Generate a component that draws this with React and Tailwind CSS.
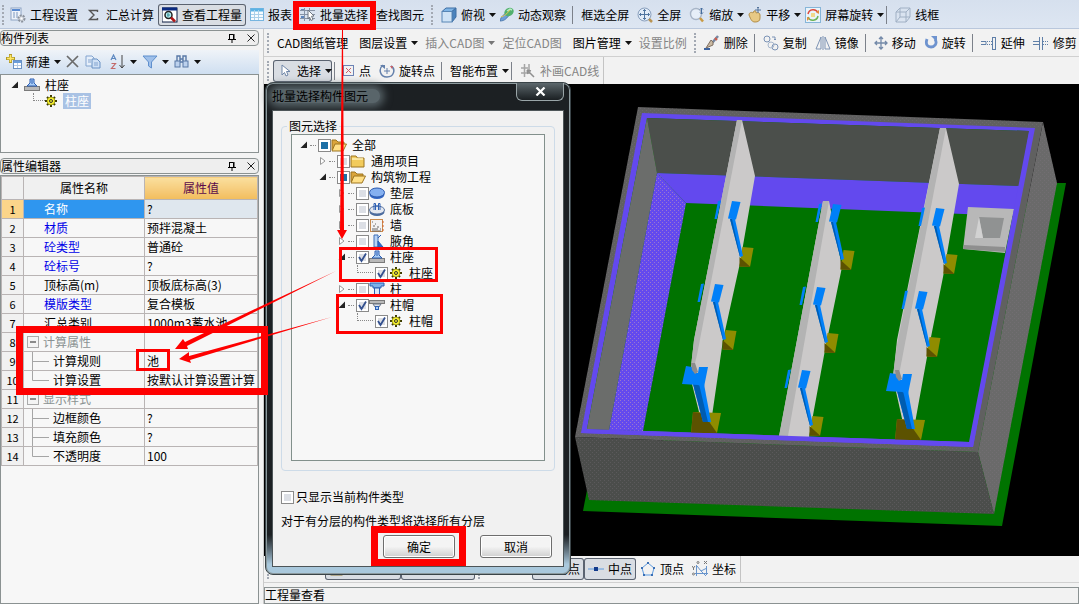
import React from 'react';

/* ---------- icons ---------- */

const Svg = ({ w = 16, h = 16, children }) => (
  <svg width={w} height={h} viewBox={`0 0 ${w} ${h}`} className="shrink-0" fill="none" aria-hidden="true">
    {children}
  </svg>
);

const SettingsIcon = () => (
  <Svg>
    <rect x="1" y="1" width="10" height="12" fill="#eef3fa" stroke="#8ea4c4" />
    <path d="M2 3h8" stroke="#5a8ad0" strokeWidth="2" />
    <path d="M3 6h2M6 6h2M3 8h2M6 8h2M3 10h2M6 10h2" stroke="#7d97bd" />
    <circle cx="11.500" cy="11.500" r="3" fill="#d8dce2" stroke="#8b929c" strokeWidth="2" strokeDasharray="2 1" />
    <circle cx="11.500" cy="11.500" r="1" fill="#fff" />
  </Svg>
);

const SigmaIcon = () => (
  <Svg>
    <path d="M11.500 5V3.500h-8L8 8l-4.500 4.500h8V11" stroke="#555" strokeWidth="1.400" />
  </Svg>
);

const ViewIcon = () => (
  <Svg>
    <rect x="0" y="1" width="15" height="14" fill="#fff" stroke="#0a1a40" />
    <path d="M0 2h15" stroke="#0a2a80" strokeWidth="3" />
    <circle cx="6.500" cy="8" r="3.500" fill="#b8f0f4" stroke="#222" strokeWidth="1.500" />
    <path d="M6 6v4M5 8h3" stroke="#3f8e94" />
    <path d="M9 10.500l4 4" stroke="#b01818" strokeWidth="2.500" />
  </Svg>
);

const ReportIcon = () => (
  <Svg w={14}>
    <rect x="0.500" y="1.500" width="13" height="12" fill="#f6fbff" stroke="#77b5e0" />
    <path d="M1 3h12" stroke="#5bb2e4" strokeWidth="3" />
    <path d="M4.500 3v10M8.500 3v10M1 7.500h12M1 10.500h12" stroke="#a9cfe9" />
  </Svg>
);

const BatchIcon = () => (
  <Svg>
    <path d="M0 3.500h15M0 7.500h15M0 11.500h15M4.500 1v13M9.500 1v13" stroke="#8793a5" />
    <path d="M1 2h3v1H1zM1 9h3v2H1z" fill="#5d85bd" />
    <path d="M8 3l6 6-2.500.3 1.500 3.200-2 1-1.500-3.500L8 12z" fill="#fff" stroke="#6f7782" />
  </Svg>
);

const CubeIcon = () => (
  <Svg>
    <path d="M1 4.500L5 1h10l-4 3.500z" fill="#7fb5e6" stroke="#3f6ea3" />
    <path d="M11 4.500L15 1v9l-4 5z" fill="#4b83bd" stroke="#3f6ea3" />
    <rect x="1" y="4.500" width="10" height="10.500" fill="#cfe3f6" stroke="#5886b5" />
  </Svg>
);

const OrbitIcon = () => (
  <Svg w={14}>
    <path d="M0 14c1-5 4-7 8-8l2 1c-3 4-5 7-10 7z" fill="#6e9ed8" stroke="#35659e" strokeWidth=".7" />
    <ellipse cx="9" cy="5" rx="5" ry="4" transform="rotate(-35 9 5)" fill="#52b06e" />
    <path d="M7 4l3-2 2 1" stroke="#b7ecc2" strokeWidth="1.500" />
    <path d="M1 10c3-1 6-3 9-7" stroke="#e8c84f" />
  </Svg>
);

const FullscreenIcon = () => (
  <Svg>
    <circle cx="7.500" cy="7.500" r="6.500" fill="#e2ecf8" stroke="#8aa0bd" />
    <path d="M7.500 2.500v10M2.500 7.500h10M6 4l1.500-1.500L9 4M6 11l1.500 1.500L9 11M4 6L2.500 7.500 4 9M11 6l1.500 1.500L11 9" stroke="#4f749f" />
    <path d="M12 12l3 3" stroke="#b99454" strokeWidth="2.500" />
  </Svg>
);

const ZoomIcon = () => (
  <Svg>
    <circle cx="7" cy="7" r="5.500" fill="#e6eef8" stroke="#a8b5c7" strokeWidth="1.400" />
    <path d="M11 11l3 3.500" stroke="#c99a43" strokeWidth="2.500" />
    <path d="M12.500 1v6M11 2.500L12.500 1 14 2.500M11 5.500L12.500 7 14 5.500" stroke="#456d9e" />
  </Svg>
);

const PanIcon = () => (
  <Svg w={14}>
    <path d="M1 8c0-3 3-3 4-2l1-2c2-1 2 1 2 2 2-1 4 0 4 2v3c0 3-2 4-5 4S3 13 1 8z" fill="#e7c985" stroke="#b28e49" />
    <path d="M10 0v6M7 3h6M9 1l1-1 1 1" stroke="#55749c" />
  </Svg>
);

const ScreenRotateIcon = () => (
  <Svg>
    <rect x="0.500" y="0.500" width="15" height="15" fill="#e9f3fa" stroke="#86b5d8" />
    <path d="M3 7c1-5 8-6 10-1" stroke="#de4a3c" strokeWidth="1.500" />
    <path d="M13 9c-1 5-8 6-10 1" stroke="#6db356" strokeWidth="1.500" />
    <path d="M11 5l3 2V3zM5 11l-3-1v4z" fill="#e18d3e" />
    <rect x="6" y="6" width="4" height="4" fill="#f0d98c" />
  </Svg>
);

const WireIcon = () => (
  <Svg>
    <path d="M1 5l4-4h10v9l-4 5H1zM1 5h10v10M11 5l4-4M5 1v9h10M5 10l-4 5" stroke="#a0b0c4" />
  </Svg>
);

const EraseIcon = () => (
  <Svg>
    <path d="M0 14h6" stroke="#3c63a0" strokeWidth="2" />
    <path d="M14 1L8 8" stroke="#7586a0" strokeWidth="2.500" />
    <path d="M9 7L7 5l-5 8 7-3z" fill="#c9b8a0" stroke="#7f6f62" />
    <path d="M11 3l2 2" stroke="#d15b4a" strokeWidth="2" />
  </Svg>
);

const CopyIcon = () => (
  <Svg>
    <circle cx="4" cy="4" r="3" stroke="#7a92b5" />
    <circle cx="12" cy="12" r="3" stroke="#7a92b5" />
    <circle cx="8" cy="10" r="3" stroke="#a6b6cc" />
    <path d="M9 2h3v3M11 4l1 1 1-1" stroke="#7a92b5" />
  </Svg>
);

const MirrorIcon = () => (
  <Svg>
    <path d="M6 2v12H1zM10 2v12h5z" stroke="#7d93b4" />
    <path d="M8 1v14" stroke="#7d93b4" />
  </Svg>
);

const MoveIcon = () => (
  <Svg w={14}>
    <path d="M7 2v12M1 8h12M5 4l2-2 2 2M5 12l2 2 2-2M3 6L1 8l2 2M11 6l2 2-2 2" stroke="#7389a8" strokeWidth="1.300" />
  </Svg>
);

const RotateIcon = () => (
  <Svg w={14}>
    <path d="M3 4c-2 6 1 8 4 8s7-3 4-8" stroke="#6e93cf" strokeWidth="2.800" />
    <path d="M7 1h6v6z" fill="#6e93cf" />
  </Svg>
);

const ExtendIcon = () => (
  <Svg>
    <path d="M0 6.500h5v3H0" stroke="#5f7fa8" />
    <path d="M6 6.500h5M6 9.500h5" stroke="#5f7fa8" strokeDasharray="1 1" />
    <rect x="11.500" y="2.500" width="3" height="12" stroke="#5f7fa8" />
  </Svg>
);

const TrimIcon = () => (
  <Svg>
    <path d="M0 6.500h6M0 9.500h6" stroke="#5f7fa8" />
    <path d="M10 6.500h5M10 9.500h5" stroke="#5f7fa8" strokeDasharray="1 1" />
    <path d="M6.500 2v13M9.500 2v13" stroke="#5f7fa8" />
  </Svg>
);

const CursorIcon = () => (
  <Svg>
    <path d="M5 2v10l2.500-2.500L9 13l2-1-1.500-3.500H13z" fill="#fff" stroke="#6f86a8" />
  </Svg>
);

const PointIcon = () => (
  <Svg w={12}>
    <rect x="0.500" y="2.500" width="10" height="10" stroke="#6d83b5" />
    <path d="M3 5l5 5M8 5l-5 5" stroke="#c9606a" />
  </Svg>
);

const RotatePointIcon = () => (
  <Svg>
    <path d="M4 2c-5 4-3 12 4 12s9-8 4-11" stroke="#6480ab" strokeWidth="1.500" />
    <path d="M1 2h5v4z" fill="#6480ab" />
    <path d="M14 3l-3 0 2 3z" fill="#c9606a" />
    <path d="M8 5v6M5 8h6" stroke="#6480ab" />
  </Svg>
);

const PatchIcon = () => (
  <Svg>
    <path d="M1 5h7M1 10h9M4.500 1v13M9 1v6" stroke="#a5a5a5" strokeWidth="1.500" />
    <path d="M7 7l7 7M7 7l4 1M7 7l1 4" stroke="#8f8f8f" strokeWidth="1.500" />
  </Svg>
);

const NewIcon = () => (
  <Svg>
    <path d="M4.500 0v9M0 4.500h9" stroke="#b29b2b" strokeWidth="3" />
    <path d="M4.500 1v7M1 4.500h7" stroke="#ffe766" strokeWidth="1.500" />
    <rect x="7.500" y="6.500" width="8" height="8" fill="#fff" stroke="#6b92c4" />
    <path d="M8 8h7" stroke="#6b9ddb" strokeWidth="2" />
    <path d="M8 11.500h7M11.500 9v5" stroke="#b6cbe4" />
  </Svg>
);

const DeleteIcon = () => (
  <Svg w={14}>
    <path d="M1 2l11 11M12 2L1 13" stroke="#6b6b6b" strokeWidth="1.700" />
  </Svg>
);

const DocsIcon = () => (
  <Svg>
    <path d="M1 2h6l2 2v8H1z" fill="#e6effa" stroke="#83a4cf" />
    <path d="M7 5h5l3 3v6H7z" fill="#cfe0f5" stroke="#6b92c4" />
    <path d="M9 9h4M9 11h4M3 6h3M3 8h3" stroke="#83a4cf" />
  </Svg>
);

const SortIcon = () => (
  <Svg>
    <path d="M1 6l2.500-5L6 6M2 4.500h3" stroke="#5c88c0" strokeWidth="1.200" />
    <path d="M1.500 9.500h4l-4 5h4" stroke="#c36a6a" strokeWidth="1.200" />
    <path d="M12 1v13M9.500 11l2.500 3 2.500-3" stroke="#444" />
  </Svg>
);

const FilterIcon = () => (
  <Svg>
    <path d="M1 2h14L9.500 8v6l-3-2V8z" fill="#9fc0ea" stroke="#5f8fcd" />
  </Svg>
);

const FindIcon = () => (
  <Svg>
    <rect x="1" y="7" width="5" height="6" fill="#bcd1ed" stroke="#5878a6" />
    <rect x="9" y="7" width="5" height="6" fill="#bcd1ed" stroke="#5878a6" />
    <path d="M3 7V2h3v5M9 7V2h3v5M6 5h3M6 8h3" stroke="#5878a6" strokeWidth="1.400" />
  </Svg>
);

const BaseIcon = () => (
  <Svg>
    <rect x="0.500" y="9.500" width="15" height="4" fill="#b9b9b9" stroke="#7a7a7a" />
    <path d="M3 9l3-3V2h4v4l3 3z" fill="#a9cdf6" stroke="#2c5fb3" />
    <path d="M8 3v4" stroke="#2c5fb3" />
  </Svg>
);

const CapIcon = () => (
  <Svg>
    <rect x="0.500" y="3.500" width="15" height="3" fill="#b9b9b9" stroke="#7a7a7a" />
    <path d="M4 7h8l-2 3H6z" fill="#dfe3ea" stroke="#6b7686" />
    <rect x="6.500" y="9.500" width="3" height="3" fill="#a9cdf6" stroke="#2c5fb3" />
  </Svg>
);

const ColumnIcon = () => (
  <Svg>
    <path d="M1 2h14v3h-3v2H4V5H1z" fill="#7db1ea" stroke="#2c5fb3" />
    <rect x="5.500" y="7" width="5" height="7" fill="#dbe9fa" stroke="#2c5fb3" />
  </Svg>
);

const SunIcon = () => (
  <Svg w={12} h={12}>
    <path d="M6 0v12M0 6h12M2 2l8 8M10 2l-8 8" stroke="#3b3b00" strokeWidth="2" />
    <circle cx="6" cy="6" r="4" fill="#f4ee2c" stroke="#77740c" strokeWidth=".6" />
    <circle cx="6" cy="6" r="1.500" fill="#f4ee2c" stroke="#333" />
  </Svg>
);

const FolderIcon = () => (
  <Svg>
    <path d="M1 3h5l1.500 2H14v9H1z" fill="#f2cb5c" stroke="#9c7420" />
    <path d="M2 6h11" stroke="#fff0b5" strokeWidth="1.500" />
  </Svg>
);

const FolderOpenIcon = () => (
  <Svg>
    <path d="M1 13V3h4l2 2h6v3" fill="#dba53b" stroke="#9c7420" />
    <path d="M1 14l3-7h11.500L12 14z" fill="#ffdf86" stroke="#9c7420" />
  </Svg>
);

const CushionIcon = () => (
  <Svg>
    <ellipse cx="8" cy="9.500" rx="7.500" ry="4.500" fill="#3367c4" />
    <ellipse cx="8" cy="7.500" rx="7.500" ry="4.500" fill="#85b0f0" stroke="#2a58ad" />
  </Svg>
);

const SlabIcon = () => (
  <Svg>
    <ellipse cx="8" cy="11" rx="7.500" ry="4" fill="#47699e" />
    <ellipse cx="8" cy="9" rx="7.500" ry="4" fill="#e4e8f0" stroke="#53709f" />
    <path d="M5 9V2.500h1.500V9M9.500 9V2.500H11V9M6.500 5h3" stroke="#2c5fb3" />
  </Svg>
);

const WallIcon = () => (
  <Svg>
    <rect x="1.500" y="2.500" width="12" height="12" fill="#f3f3f3" stroke="#c98a4d" />
    <path d="M3 5h1M6 7h1M4 9h2M8 10h2M3 12h6M11 12h1M3 14h9" stroke="#666" />
    <path d="M14 4v10" stroke="#d2602a" strokeDasharray="2 2" />
  </Svg>
);

const HaunchIcon = () => (
  <Svg>
    <path d="M5 2h4v12H5z" fill="#b8d3f5" stroke="#3c6fb8" />
    <path d="M12 2L9 5M9 8l5 6H9z" fill="#2d6cd0" stroke="#2c5fb3" />
  </Svg>
);

const MidpointIcon = () => (
  <Svg>
    <path d="M0 8h16" stroke="#5d9be0" />
    <rect x="6" y="6" width="4" height="4" fill="#123a8c" />
  </Svg>
);

const VertexIcon = () => (
  <Svg>
    <path d="M8 2l6 5-2 7H4L2 7z" stroke="#5d9be0" />
    <path d="M7 1h2v2H7zM13 6h2v2h-2zM11 13h2v2h-2zM3 13h2v2H3zM1 6h2v2H1z" fill="#3a6fb5" />
  </Svg>
);

const CoordIcon = () => (
  <Svg>
    <path d="M4.500 4v11M3 12.500h13M5 5l4 5 6-3M9 10l5 5M14.500 5v9" stroke="#6794cc" />
    <circle cx="1.500" cy="13" r="1" stroke="#777" />
    <circle cx="6" cy="1.500" r="1" stroke="#777" />
    <path d="M12 0l3 3M15 0l-3 3M0 5l1.500 2L3 5M1.500 7v2" stroke="#777" />
  </Svg>
);

const SnapIcon = () => (
  <Svg>
    <rect x="2" y="3" width="11" height="11" fill="#f3d35c" stroke="#8a7434" />
  </Svg>
);

/* ---------- toolbar parts ---------- */

const Caret = ({ muted }) => (
  <svg width="7" height="4" viewBox="0 0 7 4" className="shrink-0" aria-hidden="true">
    <path d="M0 0h7L3.500 4z" fill={muted ? '#777' : '#111'} />
  </svg>
);

const Tool = ({ icon, label, caret, pressed, muted, tight }) => (
  <button
    type="button"
    className={
      'flex h-[22px] shrink-0 items-center gap-1 whitespace-nowrap rounded-[3px] leading-none ' +
      (tight || caret ? 'pl-1 ' : 'px-1 ') +
      (pressed ? 'bg-[#d9dde3] ring-1 ring-inset ring-[#5b6370] ' : '') +
      (muted ? 'text-[#858585]' : 'text-black')
    }
  >
    {icon}
    {label && <span>{label}</span>}
    {caret && <Caret muted={muted} />}
  </button>
);

const Grip = () => <div className="ml-[3px] mr-0.5 h-5 w-1 shrink-0 border-l-2 border-dotted border-[#a3a9b3]" />;
const Sep = () => <div className="ml-0.5 mr-1 h-[18px] w-px shrink-0 bg-[#7c818a]" />;

const PanelTitle = ({ title }) => (
  <div className="mr-1 flex h-4 items-center justify-between rounded-sm border border-[#8b9292] bg-[#eeeeee] leading-none">
    <h2>{title}</h2>
    <div className="flex items-center gap-2 pr-0.5">
      <button type="button" aria-label="固定">
        <Svg w={12} h={12}>
          <path d="M3.500 2.500h4v5M3.500 2v5M2 7.500h8M8 2v5M6 8v3" stroke="#000" />
        </Svg>
      </button>
      <button type="button" aria-label="关闭">
        <Svg w={10} h={10}>
          <path d="M1.500 1.500l7 7M8.500 1.500l-7 7" stroke="#222" />
        </Svg>
      </button>
    </div>
  </div>
);

const Expander = ({ open }) => (
  <svg width="8" height="10" viewBox="0 0 8 10" className="shrink-0" fill="none" aria-hidden="true">
    {open ? <path d="M7 1.500V8H.5z" fill="#222" /> : <path d="M1.500 1.500v7L6 5z" fill="#fff" stroke="#999" />}
  </svg>
);

const CheckBox = ({ id, state }) => (
  <span className="relative flex shrink-0">
    <input
      id={id}
      type="checkbox"
      defaultChecked={state === 'on'}
      className="h-[13px] w-[13px] appearance-none border border-[#8a8a8a] bg-[#dcdfe5] ring-2 ring-inset ring-white"
    />
    {state === 'mixed' && <span className="pointer-events-none absolute inset-[3px] bg-[#1c6fa5]" />}
    {state === 'on' && (
      <svg viewBox="0 0 13 13" className="pointer-events-none absolute inset-0" fill="none" aria-hidden="true">
        <path d="M3 6l2.500 4L10 2.500" stroke="#33508f" strokeWidth="1.800" />
      </svg>
    )}
  </span>
);

/* ---------- left column ---------- */

const props = [
  { name: '名称', value: '?', active: true },
  { name: '材质', value: '预拌混凝土', key: true },
  { name: '砼类型', value: '普通砼', key: true },
  { name: '砼标号', value: '?', key: true },
  { name: '顶标高(m)', value: '顶板底标高(3)' },
  { name: '模版类型', value: '复合模板', key: true },
  { name: '汇总类别', value: '1000m3蓄水池' },
  { name: '计算属性', value: '', group: true },
  { name: '计算规则', value: '池', child: true },
  { name: '计算设置', value: '按默认计算设置计算', child: true, last: true },
  { name: '显示样式', value: '', group: true },
  { name: '边框颜色', value: '?', child: true },
  { name: '填充颜色', value: '?', child: true },
  { name: '不透明度', value: '100', child: true, last: true },
];

const PropName = ({ row }) => {
  if (row.group) {
    return (
      <div className="flex items-center gap-1 pl-[3px] text-[#8a9292]">
        <svg width="12" height="12" viewBox="0 0 12 12" className="shrink-0" aria-hidden="true">
          <rect x=".5" y=".5" width="11" height="11" fill="#f4f4f4" stroke="#aaa" />
          <path d="M3 6h6" stroke="#222" />
        </svg>
        {row.name}
      </div>
    );
  }
  if (row.child) {
    return (
      <div className="flex items-center gap-1 pl-2">
        <svg width="17" height="18" viewBox="0 0 17 18" className="shrink-0" aria-hidden="true">
          <path d={row.last ? 'M.5 0v9.500H17' : 'M.5 0v18M.5 9.500H17'} fill="none" stroke="#a5a5a5" />
        </svg>
        {row.name}
      </div>
    );
  }
  return <div className={row.key ? 'pl-5 text-[#0000e8]' : 'pl-5'}>{row.name}</div>;
};

const PropTable = () => (
  <table className="w-full table-fixed border-collapse">
    <colgroup>
      <col className="w-[22px]" />
      <col className="w-[121px]" />
      <col />
    </colgroup>
    <thead>
      <tr className="h-[23px]">
        <th className="border border-[#b9b4b4] bg-[#f0f0f0] p-0" />
        <th className="border border-[#b9b4b4] bg-[#f0f0f0] p-0 font-normal">属性名称</th>
        <th className="border border-[#b9b4b4] bg-linear-to-b from-[#fadf9e] to-[#f2bd5c] p-0 font-normal text-[#5a0a4a]">
          属性值
        </th>
      </tr>
    </thead>
    <tbody>
      {props.map((row, i) => (
        <tr key={row.name} className="h-[19px] leading-none">
          <td className={'border border-[#b9b4b4] p-0 text-center text-[11px] ' + (row.active ? 'bg-[#fbd58a]' : 'bg-[#f1f1f1]')}>
            {i + 1}
          </td>
          <td className={'border border-[#b9b4b4] p-0 ' + (row.active ? 'bg-[#2f96ef] text-white' : 'bg-[#f7f7f7]')}>
            <PropName row={row} />
          </td>
          <td className={'whitespace-nowrap border border-[#b9b4b4] p-0 pl-0.5 ' + (row.active ? 'bg-[#dfe7ee]' : 'bg-[#f7f7f7]')}>
            {row.value}
          </td>
        </tr>
      ))}
    </tbody>
  </table>
);

const LeftPanel = () => (
  <aside className="flex w-[264px] shrink-0 flex-col border-r border-[#c9c9c9] bg-[#f3f3f3] pt-px">
    <PanelTitle title="构件列表" />
    <div className="mr-1 mt-1 flex h-6 items-center gap-px bg-linear-to-b from-[#eff3f8] to-[#cfdff1] pl-0.5">
      <Tool icon={<NewIcon />} label="新建" caret />
      <Tool icon={<DeleteIcon />} tight />
      <Tool icon={<DocsIcon />} />
      <Tool icon={<SortIcon />} caret />
      <Tool icon={<FilterIcon />} caret />
      <Tool icon={<FindIcon />} caret />
    </div>
    <div className="mr-1 h-[79px] border border-[#8b9292] bg-[#f7f7f7] pt-0.5 leading-none">
      <div className="flex h-4 items-center gap-[5px] pl-2.5">
        <Expander open />
        <BaseIcon />
        <span>柱座</span>
      </div>
      <div className="ml-8 flex h-4 items-center">
        <div className="mb-2 h-2 w-3 border-b border-l border-dotted border-[#888]" />
        <SunIcon />
        <span className="ml-1.5 bg-[#a9c2e4] px-0.5 py-0.5 text-white">柱座</span>
      </div>
    </div>
    <div className="mt-[5px]">
      <PanelTitle title="属性编辑器" />
    </div>
    <div className="mr-1 mt-px flex-1 border border-[#8b9292] bg-[#f7f7f7]">
      <PropTable />
    </div>
  </aside>
);

/* ---------- model view ---------- */

// one strut against a partition wall, origin at the head's top left corner
const struts = [
  [732, 201],
  [715, 284],
  [833, 204],
  [817, 287],
  [936, 208],
  [919, 291],
  [802, 370],
];

const Strut = ({ x, y }) => (
  <g transform={`translate(${x} ${y})`}>
    <path d="M10.500 46l11 1-3.500 19-10.500-.5z" fill="#8f8c00" />
    <path d="M7.500 56l11 10-11-.5z" fill="#5c5200" />
    <path d="M-2 18h5l8 37-3 1z" fill="#0080f8" />
    <path d="M-2 18h2l8 36v2z" fill="#005cb0" />
    <path d="M0 0l8.500 1L4 18.500l-8-1z" fill="#0080f8" />
    <path d="M-14 0l3-.5-4 18.500h-2.500z" fill="#0080f8" />
  </g>
);

const EndStrut = ({ x, y }) => (
  <g transform={`translate(${x} ${y})`}>
    <path d="M11 46l28 1-4 20H9z" fill="#8f8c00" />
    <path d="M11 46l10 1 14 20H9z" fill="#5c5200" />
    <path d="M11 18h11l7 38h-8z" fill="#0080f8" />
    <path d="M11 18h6l9 38h-5z" fill="#005cb0" />
    <path d="M4 0l6 1 3 6h3l1-6h9l-4 20-6-2-16-1z" fill="#0080f8" />
    <path d="M9-3h4l3 9-3 2-3-4z" fill="#8c8c8c" />
  </g>
);

const ModelView = () => (
  <div className="min-h-[472px] flex-1 bg-black">
    <svg viewBox="264 84 815 472" preserveAspectRatio="xMinYMin meet" className="w-full" role="img" aria-label="三维模型">
      <defs>
        <pattern id="grain" width="4" height="4" patternUnits="userSpaceOnUse">
          <path d="M0 0h1v1H0zM2 2h1v1H2z" fill="#8a7a8a" fillOpacity=".25" />
        </pattern>
        <pattern id="dots" width="4" height="4" patternUnits="userSpaceOnUse">
          <path d="M0 0h1v1H0zM2 2h1v1H2z" fill="#b08ac0" fillOpacity=".7" />
        </pattern>
      </defs>
      <path d="M587 490l-4 21 419 15 64-343h-10z" fill="#007300" />
      <path d="M1043 122l14 61-63 331-16-62z" fill="#6a6a6a" />
      <path d="M575 437l403 15 16 62-405-14z" fill="#4b4d4b" />
      <path d="M638 107l405 15-65 330-403-15z" fill="#606060" />
      <path d="M642 113l393 15-62 319-392-14z" fill="#6349ee" />
      <path d="M647 118l382 13-59 311-383-13z" fill="#007300" />
      <path d="M647 118l382 13-9 55-363-13z" fill="#4b4f4b" />
      <path d="M657 173l363 13-6 30-328-13z" fill="#6349ee" />
      <path d="M647 118l10 55-48 257-22-1z" fill="#6b6d6b" />
      <path d="M657 173l29 30-43 228-34-1z" fill="#6349ee" />
      <path d="M657 173l29 30-43 228-34-1z" fill="url(#dots)" />
      <path d="M1043 122l14 61-63 331-16-62zM575 437l403 15 16 62-405-14zM638 107l405 15-1 5-400-14-61 320 392 14-1 5-397-15z" fill="url(#grain)" />

      {/* sump */}
      <path d="M968 207l46 2-9 44-42-4z" fill="#b8b8b8" />
      <path d="M964 245l41 2v5l-42-3z" fill="#8f8f8f" />
      <path d="M979 217l25 1-4 20h-17z" fill="#909292" />
      <path d="M979 217l4 21h-8z" fill="#d2d2d2" />

      {/* partition walls */}
      <path d="M737 120h5l13 56-15 87-17 77-11 76h-12l-10-40 4-36z" fill="#cbc9c9" />
      <path d="M737 120h5l-45 235-5 20h-2l4-35z" fill="#b3b3b3" />
      <path d="M823 201h6l13 66-17 83-16 87h-30l18-97z" fill="#cbc9c9" />
      <path d="M823 201h6l-41 235h-9l18-96z" fill="#b3b3b3" />
      <path d="M940 128h6l13 56-16 93-16 80-12 66h-12l-10-45 4-38z" fill="#cbc9c9" />
      <path d="M940 128h6l-47 247h-6l4-30z" fill="#b3b3b3" />

      {struts.map(([x, y]) => (
        <Strut key={`${x}-${y}`} x={x} y={y} />
      ))}
      <EndStrut x={682} y={366} />
      <EndStrut x={886} y={373} />
      <path d="M1029 131h4l-60 316-392-14 2-4 386 13z" fill="#6349ee" />
    </svg>
  </div>
);

/* ---------- dialog ---------- */

const tree = [
  { id: 'all', level: 0, label: '全部', icon: <FolderOpenIcon />, open: true, state: 'mixed' },
  { id: 'common', level: 1, label: '通用项目', icon: <FolderIcon />, open: false },
  { id: 'structure', level: 1, label: '构筑物工程', icon: <FolderOpenIcon />, open: true, state: 'mixed' },
  { id: 'cushion', level: 2, label: '垫层', icon: <CushionIcon />, open: false },
  { id: 'slab', level: 2, label: '底板', icon: <SlabIcon />, open: false },
  { id: 'wall', level: 2, label: '墙', icon: <WallIcon />, open: false },
  { id: 'haunch', level: 2, label: '腋角', icon: <HaunchIcon />, open: false },
  { id: 'base', level: 2, label: '柱座', icon: <BaseIcon />, open: true, state: 'on' },
  { id: 'base-1', level: 3, label: '柱座', icon: <SunIcon />, leaf: true, state: 'on' },
  { id: 'column', level: 2, label: '柱', icon: <ColumnIcon />, open: false },
  { id: 'cap', level: 2, label: '柱帽', icon: <CapIcon />, open: true, state: 'on' },
  { id: 'cap-1', level: 3, label: '柱帽', icon: <SunIcon />, leaf: true, state: 'on' },
];

const indent = ['pl-2', 'pl-[27px]', 'pl-[46px]', 'pl-[65px]'];

const TreeRow = ({ node }) => (
  <li className={'flex h-4 items-center ' + indent[node.level]}>
    {node.leaf ? (
      <span className="mb-2 mr-0.5 h-2 w-4 border-b border-l border-dotted border-[#888]" />
    ) : (
      <>
        <Expander open={node.open} />
        <span className="mx-0.5 w-1.5 border-b border-dotted border-[#888]" />
      </>
    )}
    <CheckBox id={node.id} state={node.state} />
    <label htmlFor={node.id} className="flex items-center gap-[5px]">
      {node.leaf ? <span className="px-0.5">{node.icon}</span> : node.icon}
      <span>{node.label}</span>
    </label>
  </li>
);

const BatchDialog = () => (
  <div
    role="dialog"
    aria-label="批量选择构件图元"
    className="absolute left-[265px] top-[82px] flex h-[493px] w-[306px] flex-col rounded-lg border border-[#3a4448] bg-linear-to-b from-[#1c2023] from-92% to-[#a9c8dc] to-98% px-[6px] pb-[7px] shadow-[inset_0_0_0_1px_#8c9a9e]"
  >
    <div className="flex h-[27px] items-start justify-between">
      <span className="mt-1.5 rounded-full bg-[#59656a] pr-3 leading-[14px] text-black shadow-[0_0_8px_4px_#59656a]">
        批量选择构件图元
      </span>
      <button
        type="button"
        aria-label="关闭"
        className="flex h-[18px] w-12 items-center justify-center rounded-b-md border border-t-0 border-[#9aa5a8] bg-linear-to-b from-[#5d686d] to-[#1b2023]"
      >
        <Svg w={11} h={9}>
          <path d="M1.500.5l8 8M9.500.5l-8 8" stroke="#fff" strokeWidth="2.200" />
        </Svg>
      </button>
    </div>
    <div className="flex flex-1 flex-col border border-[#4d5558] bg-[#f1f1f1] px-2 pb-2 pt-[7px] leading-none">
      <fieldset className="rounded border border-[#cddbe8] px-[9px] pb-[9px]">
        <legend className="-ml-1 px-0.5 leading-4">图元选择</legend>
        <ul className="h-[327px] border border-[#82908c] bg-[#f7f7f7] pt-0.5">
          {tree.map((node) => (
            <TreeRow key={node.id} node={node} />
          ))}
        </ul>
      </fieldset>
      <div className="mt-[18px] flex h-4 items-center gap-0.5">
        <CheckBox id="only-current" />
        <label htmlFor="only-current">只显示当前构件类型</label>
      </div>
      <p className="mt-2 leading-4">对于有分层的构件类型将选择所有分层</p>
      <div className="mt-auto flex justify-end gap-[25px] pr-[3px]">
        <button
          type="button"
          className="h-[23px] w-[72px] rounded-[3px] border border-[#6e6e6e] bg-linear-to-b from-[#f4f4f4] from-50% to-[#cfcfcf] shadow-[inset_0_0_0_1px_#fff]"
        >
          确定
        </button>
        <button
          type="button"
          className="h-[23px] w-[72px] rounded-[3px] border border-[#6e6e6e] bg-linear-to-b from-[#f4f4f4] from-50% to-[#cfcfcf] shadow-[inset_0_0_0_1px_#fff]"
        >
          取消
        </button>
      </div>
    </div>
  </div>
);

/* ---------- red call-outs ---------- */

const Callouts = () => (
  <svg width="1079" height="604" viewBox="0 0 1079 604" className="pointer-events-none absolute left-0 top-0 max-w-none" fill="none" aria-hidden="true">
    <g stroke="#fe0000">
      <rect x="296" y="4" width="77" height="23" strokeWidth="6" />
      <rect x="19.500" y="329.500" width="245" height="62" strokeWidth="7" />
      <rect x="137.500" y="350.500" width="31" height="19" strokeWidth="3" />
      <rect x="340.500" y="248.500" width="96" height="32" strokeWidth="3" />
      <rect x="337.500" y="295.500" width="104" height="37" strokeWidth="3" />
      <rect x="374.500" y="529.500" width="88" height="33" strokeWidth="7" />
    </g>
    <g fill="#fe0000">
      <path d="M342 30h1l1 200h3l-5 9-5-9h3z" />
      <path d="M336 271L187 346l1 3-13 0 8-10 2 3z" />
      <path d="M332 317l-142 43 1 3-12-4 10-7 0 4z" />
    </g>
  </svg>
);

const App = () => (
  <div className="relative flex min-h-screen flex-col overflow-hidden bg-[#f2f2f2] font-['Noto_Sans_CJK_SC',sans-serif] text-[12px] leading-4 text-black">
    {/* view toolbar */}
    <div className="flex h-[29px] items-center border-b border-[#b9c7dc] bg-linear-to-b from-[#d6e0ee] to-[#dde6f2] pt-0.5">
      <div className="ml-0.5 h-5 w-1 shrink-0 border-l-2 border-dotted border-[#a3a9b3]" />
      <Tool icon={<SettingsIcon />} label="工程设置" />
      <Tool icon={<SigmaIcon />} label="汇总计算" />
      <Tool icon={<ViewIcon />} label="查看工程量" pressed />
      <Tool icon={<ReportIcon />} label="报表" />
      <Tool icon={<BatchIcon />} label="批量选择" />
      <Tool label="查找图元" />
      <Grip />
      <Tool icon={<CubeIcon />} label="俯视" caret />
      <Tool icon={<OrbitIcon />} label="动态观察" />
      <Sep />
      <Tool label="框选全屏" />
      <Tool icon={<FullscreenIcon />} label="全屏" />
      <Tool icon={<ZoomIcon />} label="缩放" caret />
      <Tool icon={<PanIcon />} label="平移" caret />
      <Tool icon={<ScreenRotateIcon />} label="屏幕旋转" caret />
      <Sep />
      <Tool icon={<WireIcon />} label="线框" />
    </div>

    <div className="flex flex-1">
      <LeftPanel />
      <main className="flex min-w-0 flex-1 flex-col">
        {/* edit toolbar */}
        <div className="flex h-7 items-center border-b border-[#d0d0d0]">
          <Grip />
          <div className="flex gap-[3px]">
            <Tool label="CAD图纸管理" />
            <Tool label="图层设置" caret />
            <Tool label="插入CAD图" caret muted />
            <Tool label="定位CAD图" muted />
            <Tool label="图片管理" caret />
            <Tool label="设置比例" muted />
          </div>
          <Grip />
          <Tool icon={<EraseIcon />} label="删除" />
          <Sep />
          <Tool icon={<CopyIcon />} label="复制" />
          <Tool icon={<MirrorIcon />} label="镜像" />
          <Sep />
          <Tool icon={<MoveIcon />} label="移动" />
          <Tool icon={<RotateIcon />} label="旋转" />
          <Sep />
          <Tool icon={<ExtendIcon />} label="延伸" />
          <Tool icon={<TrimIcon />} label="修剪" />
        </div>

        {/* draw toolbar */}
        <div className="flex h-[27px] items-center">
          <Grip />
          <Tool icon={<CursorIcon />} label="选择" caret pressed />
          <Sep />
          <Tool icon={<PointIcon />} label="点" />
          <Tool icon={<RotatePointIcon />} label="旋转点" />
          <Sep />
          <Tool label="智能布置" caret />
          <Sep />
          <Tool icon={<PatchIcon />} label="补画CAD线" muted />
          <div className="h-full w-px bg-[#c4c4c4]" />
        </div>

        <ModelView />

        {/* snap toolbar */}
        <div className="flex h-[27px] items-center border-b border-[#d0d0d0]">
          <Grip />
          <Tool icon={<CursorIcon />} label="正交" />
          <Tool icon={<SnapIcon />} label="对象捕捉" pressed />
          <Tool icon={<ReportIcon />} label="动态输入" pressed />
          <Grip />
          <Tool icon={<PointIcon />} label="交点" />
          <Tool icon={<MidpointIcon />} label="垂点" pressed />
          <Tool icon={<MidpointIcon />} label="中点" pressed />
          <Tool icon={<VertexIcon />} label="顶点" />
          <Tool icon={<CoordIcon />} label="坐标" />
          <div className="h-full w-px bg-[#c4c4c4]" />
        </div>
        <h2 className="mt-1 h-[17px] border border-[#8b9292] bg-[#f2f2f2] leading-[14px]">工程量查看</h2>
      </main>
    </div>

    <BatchDialog />
    <Callouts />
  </div>
);

export default App;
